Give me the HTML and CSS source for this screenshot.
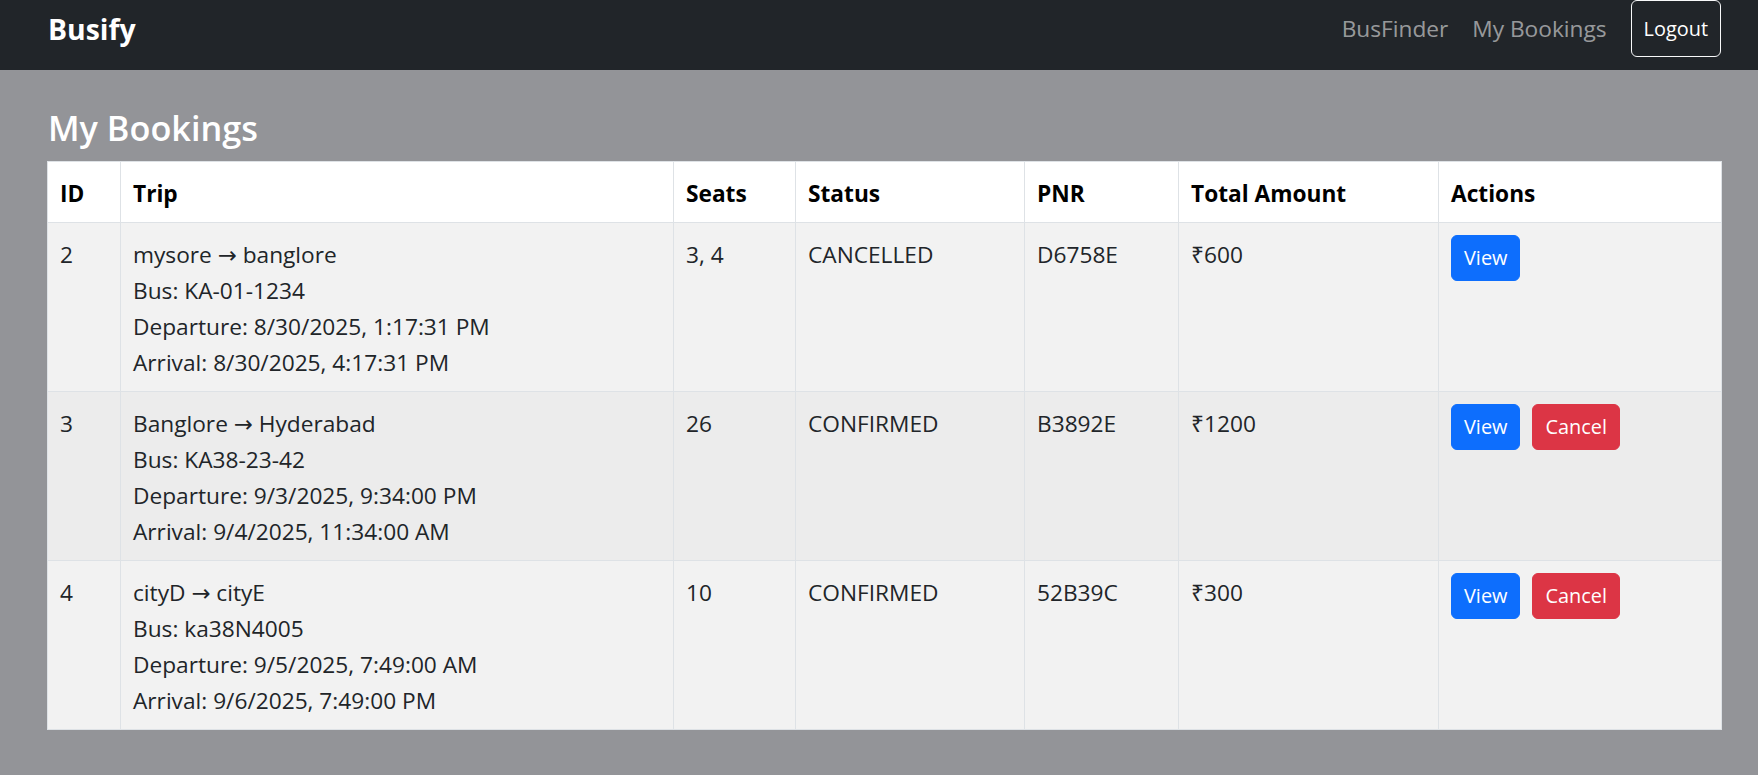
FILE: index.html
```html
<!DOCTYPE html>
<html>
<head>
<meta charset="utf-8">
<title>Busify</title>
<link rel="stylesheet" href="styles.css">
</head>
<body>
<nav class="navbar">
  <div class="nav-inner">
    <a class="brand" href="#">Busify</a>
    <div class="nav-links">
      <a class="nav-link" href="#">BusFinder</a>
      <a class="nav-link" href="#">My Bookings</a>
      <button class="btn-logout">Logout</button>
    </div>
  </div>
</nav>
<main class="container">
  <h4 class="page-title">My Bookings</h4>
  <table class="bookings">
    <colgroup>
      <col class="c-id"><col class="c-trip"><col class="c-seats"><col class="c-status"><col class="c-pnr"><col class="c-amount"><col class="c-actions">
    </colgroup>
    <thead>
      <tr><th>ID</th><th>Trip</th><th>Seats</th><th>Status</th><th>PNR</th><th>Total Amount</th><th>Actions</th></tr>
    </thead>
    <tbody>
      <tr class="striped">
        <td>2</td>
        <td><div>mysore → banglore</div><div>Bus: KA-01-1234</div><div>Departure: 8/30/2025, 1:17:31 PM</div><div>Arrival: 8/30/2025, 4:17:31 PM</div></td>
        <td>3, 4</td>
        <td>CANCELLED</td>
        <td>D6758E</td>
        <td>₹600</td>
        <td class="actions"><button class="btn btn-view">View</button></td>
      </tr>
      <tr class="hovered">
        <td>3</td>
        <td><div>Banglore → Hyderabad</div><div>Bus: KA38-23-42</div><div>Departure: 9/3/2025, 9:34:00 PM</div><div>Arrival: 9/4/2025, 11:34:00 AM</div></td>
        <td>26</td>
        <td>CONFIRMED</td>
        <td>B3892E</td>
        <td>₹1200</td>
        <td class="actions"><button class="btn btn-view">View</button><button class="btn btn-cancel">Cancel</button></td>
      </tr>
      <tr class="striped">
        <td>4</td>
        <td><div>cityD → cityE</div><div>Bus: ka38N4005</div><div>Departure: 9/5/2025, 7:49:00 AM</div><div>Arrival: 9/6/2025, 7:49:00 PM</div></td>
        <td>10</td>
        <td>CONFIRMED</td>
        <td>52B39C</td>
        <td>₹300</td>
        <td class="actions"><button class="btn btn-view">View</button><button class="btn btn-cancel">Cancel</button></td>
      </tr>
    </tbody>
  </table>
</main>
</body>
</html>
```
FILE: styles.css
```css
* { box-sizing: border-box; }
body {
  margin: 0;
  background: #939498;
  font-family: "Open Sans", "Noto Sans", "DejaVu Sans", sans-serif;
  font-size: 22.7px;
  line-height: 36px;
  color: #212529;
}
.navbar {
  background: #212529;
  height: 70px;
  padding: 0 37px 0 47px;
}
.nav-inner {
  height: 57px;
  display: flex;
  align-items: center;
  justify-content: space-between;
}
.brand {
  color: #fff;
  font-weight: 700;
  font-size: 28.4px;
  line-height: 45px;
  text-decoration: none;
  padding-left: 1px;
  margin-top: 2px;
}
.nav-links {
  display: flex;
  align-items: center;
  height: 100%;
}
.nav-link {
  color: rgba(255, 255, 255, 0.55);
  text-decoration: none;
  padding: 0 12px;
  font-size: 22.7px;
  line-height: 36px;
  margin-top: 1px;
}
.btn-logout {
  margin-left: 12px;
  height: 57px;
  padding: 0 12px;
  background: transparent;
  border: 1px solid #f8f9fa;
  border-radius: 6px;
  color: #fff;
  font-family: inherit;
  font-size: 19.9px;
  line-height: 32px;
}
.container {
  padding: 0 37px 0 47px;
}
.page-title {
  margin: 36px 0 12px;
  font-size: 34.3px;
  line-height: 43px;
  font-weight: 600;
  color: #fff;
  padding-left: 1px;
}
.bookings {
  width: 100%;
  border-collapse: collapse;
  table-layout: fixed;
  border: 1px solid #dee2e6;
}
.c-id { width: 73px; }
.c-trip { width: 553px; }
.c-seats { width: 122px; }
.c-status { width: 229px; }
.c-pnr { width: 154px; }
.c-amount { width: 260px; }
.c-actions { width: 283px; }
.bookings th,
.bookings td {
  border: 1px solid #dee2e6;
  padding: 13.5px 12px 10.5px;
  text-align: left;
  vertical-align: top;
  white-space: nowrap;
}
.bookings td.actions {
  padding: 12px;
}
.bookings th {
  background: #fff;
  font-weight: 700;
  color: #000;
}
.bookings tr.striped td { background: #f2f2f2; }
.bookings tr.hovered td { background: #ececec; }
.btn {
  height: 46px;
  padding: 0 12px;
  border-radius: 6px;
  color: #fff;
  font-family: inherit;
  font-size: 19.9px;
  line-height: 32px;
  vertical-align: top;
  margin-right: 12px;
}
.btn-view { background: #0d6efd; border: 1px solid #0d6efd; }
.btn-cancel { background: #dc3545; border: 1px solid #dc3545; }
```
